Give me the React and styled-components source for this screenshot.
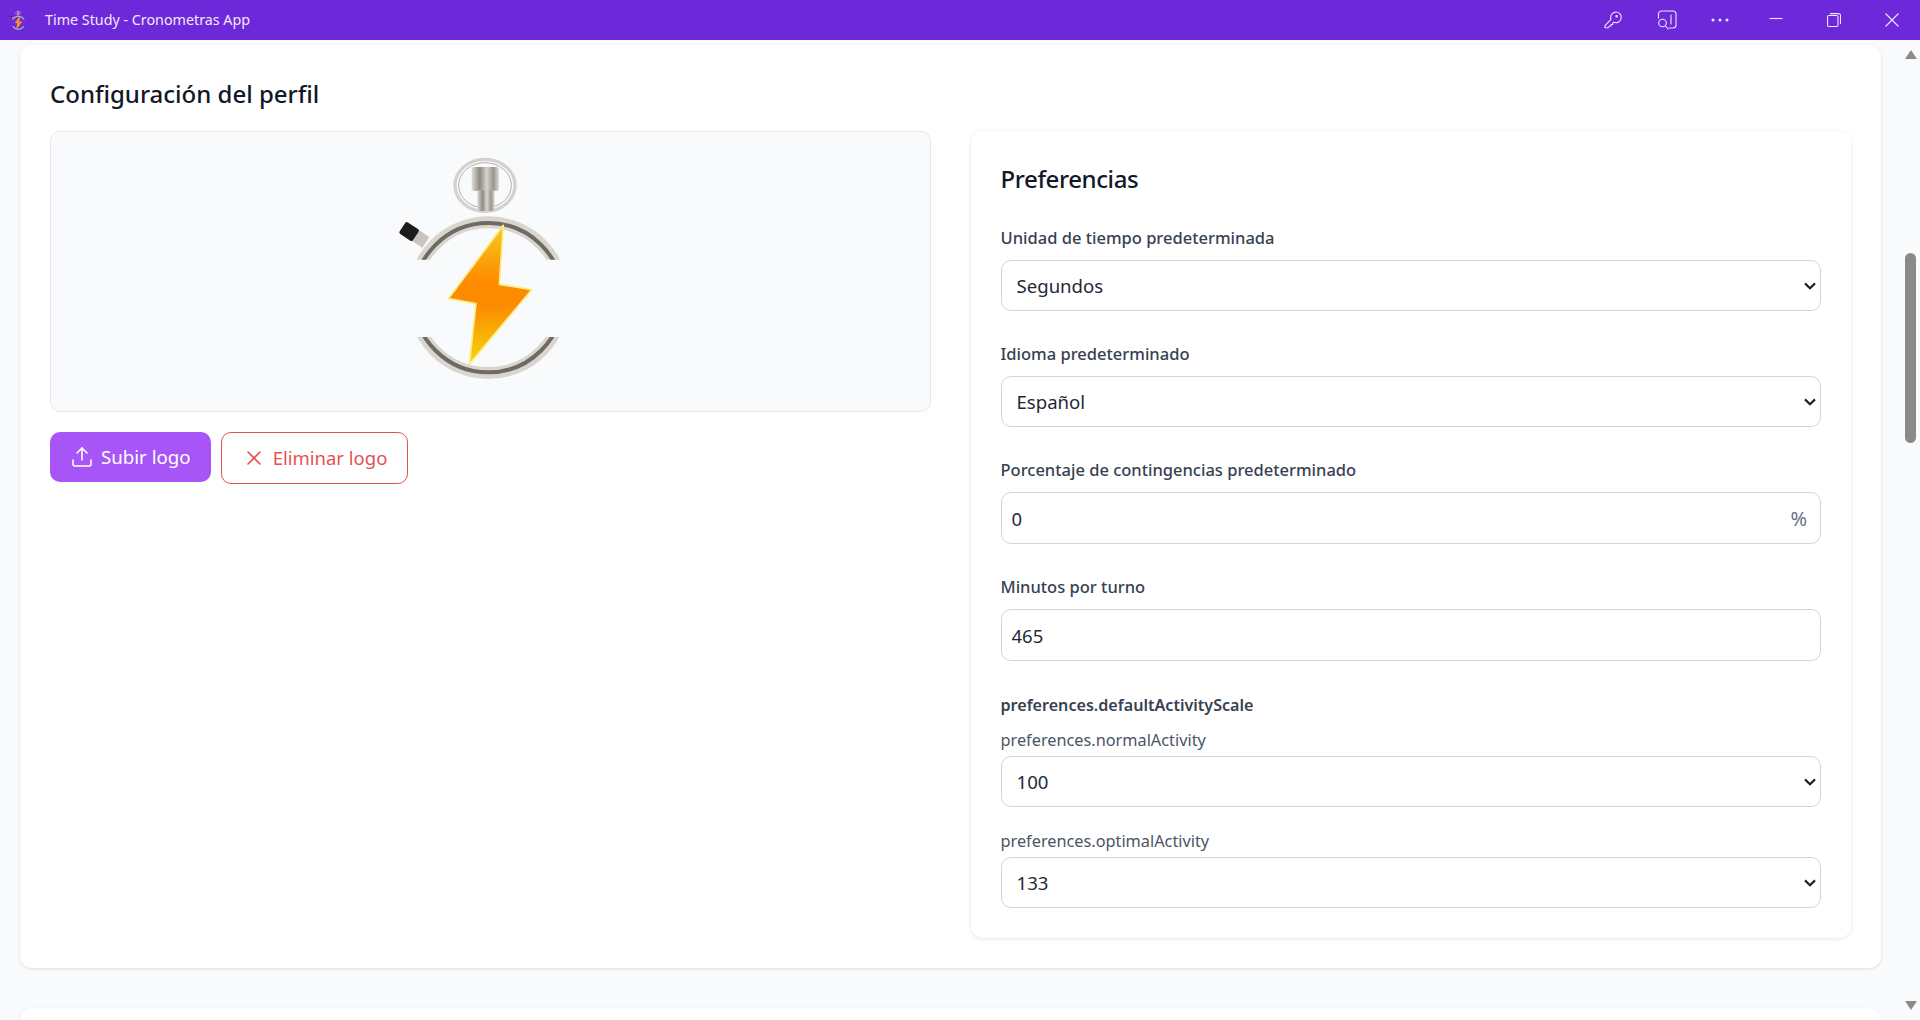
import styled, { createGlobalStyle } from "styled-components";
import { Upload, X } from "lucide-react";

const GlobalStyle = createGlobalStyle`
  html, body {
    margin: 0;
    padding: 0;
    height: 100%;
    overflow: hidden;
    background: #f9fafb;
  }
  * {
    box-sizing: border-box;
  }
  body {
    font-family: "Noto Sans", "Open Sans", sans-serif;
    color: #111827;
  }
`;

const Window = styled.div`
  height: 1020px;
  display: flex;
  flex-direction: column;
  overflow: hidden;
`;

const TitleBar = styled.header`
  height: 40px;
  flex: none;
  background: #6d28d9;
  display: flex;
  align-items: center;
  color: #f1e8ff;
`;

const AppIcon = styled.div`
  width: 45px;
  display: flex;
  justify-content: center;
  padding-right: 9px;
`;

const AppName = styled.span`
  font-size: 14.3px;
  line-height: 18px;
  padding-bottom: 1px;
  flex: 1;
`;

const WindowIcons = styled.div`
  display: flex;
  align-items: center;
  padding-right: 21px;
`;

const BarIcon = styled.svg`
  display: block;
  fill: none;
  stroke: #efe6ff;
  stroke-width: 1.1;
  margin-left: ${(p) => p.$gap}px;
`;

const Body = styled.div`
  flex: 1;
  min-height: 0;
  display: flex;
`;

const Scroller = styled.main`
  flex: 1;
  min-width: 0;
  padding: 5px 20px 0;
  display: flex;
  flex-direction: column;
  gap: 40px;
  overflow: hidden;
`;

const Scrollbar = styled.div`
  width: 19px;
  flex: none;
  display: flex;
  flex-direction: column;
  align-items: center;
  padding: 10px 0 10px 0;
`;

const Arrow = styled.div`
  width: 0;
  height: 0;
  border-left: 6px solid transparent;
  border-right: 6px solid transparent;
  ${(p) =>
    p.$down
      ? "border-top: 9px solid #8a8a8a; margin-top: auto;"
      : "border-bottom: 9px solid #8a8a8a;"}
`;

const Thumb = styled.div`
  width: 11px;
  height: 190px;
  margin-top: 194px;
  border-radius: 6px;
  background: #8a8a8a;
`;

const Card = styled.section`
  flex: none;
  background: #fff;
  border-radius: 12px;
  box-shadow: 0 1px 3px rgba(0, 0, 0, 0.12);
  padding: 31px 30px 30px;
`;

const EmptyCard = styled(Card)`
  height: 120px;
`;

const PageTitle = styled.h2`
  margin: 0 0 19px;
  font-size: 24px;
  line-height: 36px;
  font-weight: 500;
`;

const Columns = styled.div`
  display: grid;
  grid-template-columns: 1fr 1fr;
  gap: 40px;
  align-items: start;
`;

const LogoBox = styled.div`
  height: 281px;
  background: #f9fafb;
  border: 1px solid #e5e7eb;
  border-radius: 10px;
  display: flex;
  align-items: center;
  justify-content: center;
`;

const Actions = styled.div`
  display: flex;
  align-items: flex-start;
  gap: 10px;
  margin-top: 20px;
`;

const Button = styled.button`
  display: flex;
  align-items: center;
  gap: 7px;
  font-family: inherit;
  font-size: ${(p) => (p.$outline ? 18.5 : 18.7)}px;
  line-height: 26px;
  border-radius: 10px;
  cursor: pointer;
  padding: 12px 20px;
  background: ${(p) => (p.$outline ? "#fff" : "#a855f7")};
  color: ${(p) => (p.$outline ? "#e25252" : "#fff")};
  border: ${(p) => (p.$outline ? "1px solid #e25252" : "none")};
`;

const Panel = styled.section`
  background: #fff;
  border-radius: 12px;
  box-shadow: 0 1px 4px rgba(0, 0, 0, 0.1);
  padding: 30px;
  display: flex;
  flex-direction: column;
`;

const PanelTitle = styled.h3`
  margin: 0 0 29px;
  font-size: 24px;
  line-height: 36px;
  font-weight: 500;
  letter-spacing: -0.4px;
`;

const Field = styled.div`
  display: flex;
  flex-direction: column;
  margin-bottom: ${(p) => p.$after ?? 31}px;
  &:last-child {
    margin-bottom: 0;
  }
`;

const Label = styled.label`
  font-size: 16.5px;
  line-height: 24px;
  font-weight: 500;
  color: #374151;
  margin-bottom: 10px;
`;

const GroupLabel = styled.div`
  font-size: 16.1px;
  line-height: 24px;
  font-weight: 600;
  color: #374151;
  margin-bottom: 11px;
`;

const SubLabel = styled.label`
  font-size: 16.3px;
  line-height: 24px;
  color: #4b5563;
  margin-bottom: 4px;
`;

const chevron = encodeURIComponent(
  '<svg xmlns="http://www.w3.org/2000/svg" width="12" height="8" viewBox="0 0 12 8"><path d="M1 1.4 6 6.2 11 1.4" fill="none" stroke="#1f2128" stroke-width="2.2"/></svg>'
);

const Select = styled.select`
  appearance: none;
  height: 51px;
  width: 100%;
  font-family: inherit;
  font-size: 18.6px;
  color: #1f2937;
  padding: 0 24px 0 15px;
  background: #fff url("data:image/svg+xml,${chevron}") no-repeat right 4px center;
  border: 1px solid #d1d5db;
  border-radius: 10px;
`;

const InputBox = styled.div`
  height: 52px;
  display: flex;
  align-items: center;
  border: 1px solid #d1d5db;
  border-radius: 10px;
  padding: 0 10px;
  background: #fff;
`;

const Input = styled.input`
  flex: 1;
  min-width: 0;
  border: none;
  outline: none;
  padding: 0;
  font-family: inherit;
  font-size: 18.5px;
  color: #1f2937;
  background: transparent;
`;

const Suffix = styled.span`
  font-size: 20px;
  color: #6b7280;
  padding-right: 3px;
`;

// stopwatch logo, drawn in the units of a 660x780 canvas
const StopwatchLogo = ({ width, height, idPrefix }) => (
  <svg width={width} height={height} viewBox="30 5 660 780" style={{ display: "block" }}>
    <defs>
      <linearGradient id={`${idPrefix}bolt`} x1="0" y1="0" x2="0" y2="1">
        <stop offset="0" stopColor="#f5cc20" />
        <stop offset="0.4" stopColor="#ff8a00" />
        <stop offset="0.58" stopColor="#fb8c00" />
        <stop offset="1" stopColor="#f6d60c" />
      </linearGradient>
      <linearGradient id={`${idPrefix}crown`} x1="0" y1="0" x2="1" y2="0">
        <stop offset="0" stopColor="#e0dcd6" />
        <stop offset="0.3" stopColor="#8f8a82" />
        <stop offset="0.55" stopColor="#d8d4ce" />
        <stop offset="0.8" stopColor="#9a958d" />
        <stop offset="1" stopColor="#e0dcd6" />
      </linearGradient>
      <clipPath id={`${idPrefix}arcs`}>
        <rect x="90" y="200" width="530" height="158" />
        <rect x="90" y="590" width="530" height="140" />
      </clipPath>
    </defs>
    <ellipse cx="345" cy="135" rx="90" ry="78" fill="none" stroke="#d5d2cd" strokeWidth="10" />
    <ellipse cx="345" cy="135" rx="79" ry="68" fill="none" stroke="#b3afa9" strokeWidth="3" />
    <rect x="305" y="80" width="82" height="72" rx="8" fill={`url(#${idPrefix}crown)`} />
    <rect x="322" y="150" width="52" height="62" fill={`url(#${idPrefix}crown)`} />
    <g clipPath={`url(#${idPrefix}arcs)`}>
      <circle cx="355" cy="472" r="226" fill="none" stroke="#d9d6d0" strokeWidth="36" />
      <circle cx="355" cy="472" r="224" fill="none" stroke="#6f6a63" strokeWidth="12" />
    </g>
    <g transform="rotate(33 135 285)">
      <rect x="130" y="266" width="44" height="38" fill="#c9c5be" />
      <rect x="90" y="264" width="48" height="42" rx="6" fill="#1d1c1b" />
    </g>
    <polygon
      points="400,255 388,432 485,448 298,672 318,490 235,475"
      fill={`url(#${idPrefix}bolt)`}
      stroke="#fbee8a"
      strokeWidth="5"
      strokeLinejoin="round"
    />
  </svg>
);

const KeyIcon = () => (
  <BarIcon width="18" height="18" viewBox="0 0 18 18" $gap={0}>
    <path d="M1 14.6 7 8.3A5.3 5.3 0 1 1 10 11.3L8.7 12V13.5H7V15H5.5L4 16.8H1Z" strokeLinejoin="round" />
    <circle cx="12.6" cy="5.2" r="0.7" />
  </BarIcon>
);

const SidebarSearchIcon = () => (
  <BarIcon width="20" height="20" viewBox="0 0 20 20" $gap={35}>
    <path d="M1.5 8V4a3 3 0 0 1 3-3H16a3 3 0 0 1 3 3v11a3 3 0 0 1-3 3h-4" strokeLinecap="round" />
    <path d="M14 5v9" strokeLinecap="round" />
    <circle cx="5.5" cy="13" r="3.8" />
    <path d="M8.5 16 11 19" strokeLinecap="round" />
  </BarIcon>
);

const DotsIcon = () => (
  <BarIcon width="18" height="4" viewBox="0 0 18 4" $gap={34} style={{ fill: "#efe6ff", stroke: "none" }}>
    <circle cx="2" cy="2" r="1.5" />
    <circle cx="9" cy="2" r="1.5" />
    <circle cx="16" cy="2" r="1.5" />
  </BarIcon>
);

const MinimizeIcon = () => (
  <BarIcon width="14" height="14" viewBox="0 0 14 14" $gap={40}>
    <path d="M0.5 5.5H13.5" />
  </BarIcon>
);

const RestoreIcon = () => (
  <BarIcon width="14" height="14" viewBox="0 0 14 14" $gap={44}>
    <rect x="0.5" y="2.5" width="10.5" height="11" rx="1.5" />
    <path d="M3 .6h8.5a2 2 0 0 1 2 2V11" />
  </BarIcon>
);

const CloseIcon = () => (
  <BarIcon width="14" height="14" viewBox="0 0 14 14" $gap={44}>
    <path d="M.5.5 13.5 13.5M13.5.5.5 13.5" />
  </BarIcon>
);

const App = () => {
  return (
    <Window>
      <GlobalStyle />
      <TitleBar>
        <AppIcon>
          <StopwatchLogo width={19} height={23} idPrefix="small-" />
        </AppIcon>
        <AppName>Time Study - Cronometras App</AppName>
        <WindowIcons>
          <KeyIcon />
          <SidebarSearchIcon />
          <DotsIcon />
          <MinimizeIcon />
          <RestoreIcon />
          <CloseIcon />
        </WindowIcons>
      </TitleBar>
      <Body>
        <Scroller>
          <Card>
            <PageTitle>Configuración del perfil</PageTitle>
            <Columns>
              <div>
                <LogoBox>
                  <StopwatchLogo width={220} height={260} idPrefix="big-" />
                </LogoBox>
                <Actions>
                  <Button>
                    <Upload size={24} strokeWidth={1.6} />
                    Subir logo
                  </Button>
                  <Button $outline>
                    <X size={24} strokeWidth={1.6} />
                    Eliminar logo
                  </Button>
                </Actions>
              </div>
              <Panel>
                <PanelTitle>Preferencias</PanelTitle>
                <Field>
                  <Label>Unidad de tiempo predeterminada</Label>
                  <Select defaultValue="s">
                    <option value="s">Segundos</option>
                    <option value="m">Minutos</option>
                  </Select>
                </Field>
                <Field>
                  <Label>Idioma predeterminado</Label>
                  <Select defaultValue="es">
                    <option value="es">Español</option>
                    <option value="en">English</option>
                  </Select>
                </Field>
                <Field>
                  <Label>Porcentaje de contingencias predeterminado</Label>
                  <InputBox>
                    <Input defaultValue="0" />
                    <Suffix>%</Suffix>
                  </InputBox>
                </Field>
                <Field $after={32}>
                  <Label>Minutos por turno</Label>
                  <InputBox>
                    <Input defaultValue="465" />
                  </InputBox>
                </Field>
                <GroupLabel>preferences.defaultActivityScale</GroupLabel>
                <Field $after={22}>
                  <SubLabel>preferences.normalActivity</SubLabel>
                  <Select defaultValue="100">
                    <option value="100">100</option>
                    <option value="60">60</option>
                  </Select>
                </Field>
                <Field>
                  <SubLabel>preferences.optimalActivity</SubLabel>
                  <Select defaultValue="133">
                    <option value="133">133</option>
                    <option value="80">80</option>
                  </Select>
                </Field>
              </Panel>
            </Columns>
          </Card>
          <EmptyCard />
        </Scroller>
        <Scrollbar>
          <Arrow />
          <Thumb />
          <Arrow $down />
        </Scrollbar>
      </Body>
    </Window>
  );
};

export default App;
